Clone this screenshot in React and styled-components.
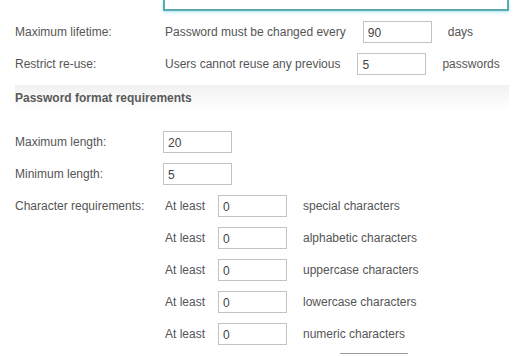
import React from 'react';
import styled, { createGlobalStyle } from 'styled-components';

const GlobalStyle = createGlobalStyle`
  body {
    margin: 0;
    background: #ffffff;
    font-family: "Liberation Sans", Arial, sans-serif;
    font-size: 12px;
    color: #555555;
    overflow: hidden;
  }
`;

const Page = styled.div`
  width: 527px;
  height: 356px;
  overflow: hidden;
`;

const Row = styled.div`
  display: flex;
  align-items: center;
  height: 32px;
  padding-left: 15px;
`;

const Label = styled.div`
  width: 148px;
  flex-shrink: 0;
`;

const Value = styled.div`
  display: flex;
  align-items: center;
`;

const Text = styled.span`
  padding-left: 2px;
  white-space: nowrap;
`;

const Input = styled.input`
  box-sizing: border-box;
  width: 69px;
  height: 22px;
  margin-left: ${p => p.$gap || 0}px;
  margin-right: 14px;
  padding: 2px 4px 0;
  border: 1px solid #c2c2c2;
  font-family: "Liberation Sans", Arial, sans-serif;
  font-size: 12px;
  color: #444444;
  background: #ffffff;
  outline: none;
`;

const TopArea = styled.div`
  display: flex;
  padding-left: 163px;
  margin-bottom: 5px;
`;

const FocusedBox = styled.div`
  box-sizing: border-box;
  width: 346px;
  height: 11px;
  border: 2px solid #5aa9ae;
  border-top: none;
  box-shadow: 0 1px 3px #9fe8ee;
  background: #ffffff;
`;

const SectionHeader = styled.div`
  margin: 5px 18px 16px 15px;
  height: 25px;
  display: flex;
  align-items: center;
  font-weight: bold;
  color: #5a5a5a;
  background: linear-gradient(to bottom, #f1f1f1, #ffffff);
`;

const AtLeast = styled(Text)`
  width: 53px;
`;

const Footer = styled.div`
  display: flex;
  padding-left: 340px;
  margin-top: 3px;
`;

const FooterButton = styled.div`
  width: 68px;
  height: 20px;
  border-top: 1px solid #9a9a9a;
`;

const charReqs = ['special', 'alphabetic', 'uppercase', 'lowercase', 'numeric'];

const App = () => (
  <Page>
    <GlobalStyle />
    <TopArea>
      <FocusedBox />
    </TopArea>
    <Row>
      <Label>Maximum lifetime:</Label>
      <Value>
        <Text>Password must be changed every</Text>
        <Input $gap={17} defaultValue="90" />
        <Text>days</Text>
      </Value>
    </Row>
    <Row>
      <Label>Restrict re-use:</Label>
      <Value>
        <Text>Users cannot reuse any previous</Text>
        <Input $gap={17} defaultValue="5" />
        <Text>passwords</Text>
      </Value>
    </Row>
    <SectionHeader>Password format requirements</SectionHeader>
    <Row>
      <Label>Maximum length:</Label>
      <Value>
        <Input defaultValue="20" />
      </Value>
    </Row>
    <Row>
      <Label>Minimum length:</Label>
      <Value>
        <Input defaultValue="5" />
      </Value>
    </Row>
    {charReqs.map((kind, i) => (
      <Row key={kind}>
        <Label>{i === 0 ? 'Character requirements:' : ''}</Label>
        <Value>
          <AtLeast>At least</AtLeast>
          <Input defaultValue="0" />
          <Text>{kind} characters</Text>
        </Value>
      </Row>
    ))}
    <Footer>
      <FooterButton />
    </Footer>
  </Page>
);

export default App;
